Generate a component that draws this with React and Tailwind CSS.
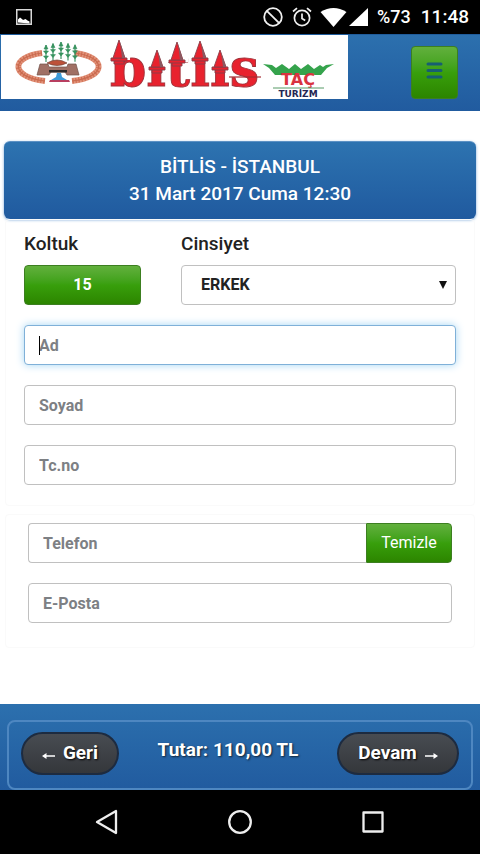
import React from 'react';

const inputBase =
  'block h-10 border bg-white px-[14px] text-base font-bold text-[#222] placeholder:text-[#7d8084] placeholder:opacity-100 outline-none';
const field = `${inputBase} w-full rounded border-[#c0c0c0]`;
const green =
  'bg-linear-to-b from-[#62b03c] via-[#389f0c] to-[#2c8500] border border-[#3c7f20]';
const pill =
  'flex h-[43px] items-center justify-center gap-2 rounded-full border-2 border-[#1d2b40] bg-linear-to-b from-[#484c52] to-[#34373b] text-[19px] font-bold text-white [text-shadow:1px_1px_2px_#000]';

function StatusBar() {
  return (
    <div className="flex h-[34px] shrink-0 items-center bg-black pl-4 pr-[11px] text-white">
      <svg width="16" height="16" viewBox="0 0 16 16" aria-hidden="true">
        <rect x="0.75" y="0.75" width="14.5" height="14.5" fill="none" stroke="#d8d8d8" strokeWidth="1.5" />
        <path d="M2 13.5V10.500l2-2 2 1.500 1 1 2.500-1 2 1.500 2 1v2z" fill="#fff" />
      </svg>
      <div className="ml-auto flex items-center">
        <svg width="20" height="20" viewBox="0 0 20 20" fill="none" stroke="#f0f0f0" strokeWidth="1.8" aria-hidden="true">
          <circle cx="10" cy="10" r="8.8" />
          <path d="M3.8 3.8l12.4 12.4" />
        </svg>
        <svg className="ml-[9px]" width="20" height="20" viewBox="0 0 20 20" fill="none" stroke="#f0f0f0" strokeWidth="1.7" aria-hidden="true">
          <circle cx="10" cy="11" r="7.6" />
          <path d="M10 6.500v5l3.200 2M1 4.500l4-3.400M19 4.500l-4-3.400" />
        </svg>
        <svg className="ml-2" width="27" height="19" viewBox="0 0 27 19" fill="#fff" aria-hidden="true">
          <path d="M0.500 4Q13.500-4 26.500 4L13.500 19z" />
        </svg>
        <svg className="ml-[2px]" width="19" height="18" viewBox="0 0 19 18" fill="#fff" aria-hidden="true">
          <path d="M19 0v18H0z" />
        </svg>
        <span className="ml-[9px] text-lg font-medium">%73</span>
        <span className="ml-[10px] text-[19px] font-medium">11:48</span>
      </div>
    </div>
  );
}

const trees = [45, 52, 60, 67, 74];
const towers = [
  { x: 118, top: 5, base: 23 },
  { x: 156, top: 15, base: 32 },
  { x: 176, top: 7, base: 25 },
  { x: 199, top: 6, base: 23 },
  { x: 219, top: 15, base: 32 },
];

function Logo() {
  return (
    <svg className="block h-16 w-[347px] bg-white" viewBox="0 0 347 64" role="img" aria-label="Bitlis Taç Turizm">
      <g fill="none">
        <path d="M41 18C9 22 9 42 44 46M74 18C106 22 106 42 71 46" stroke="#e2937a" strokeWidth="6" />
        <path d="M41 18C9 22 9 42 44 46M74 18C106 22 106 42 71 46" stroke="#cf6f54" strokeWidth="5" strokeDasharray="1.200 1.800" />
        <path d="M41 18C9 22 9 42 44 46M74 18C106 22 106 42 71 46" stroke="#c96a4e" strokeWidth="1.200" />
      </g>
      <g stroke="#2f8b59" strokeWidth="1.100" fill="#38955f">
        {trees.map((x) => (
          <g key={x} transform={`translate(${x} ${7 + Math.abs(x - 60) / 5})`}>
            <path d="M0 0v17" />
            <path d="M0 0l2 4h-4zM-2.500 6h5L0 9zM-2.500 11h5L0 14z" strokeWidth="0.500" />
          </g>
        ))}
      </g>
      <path d="M46 28Q56 22 66 28Q56 33 46 28z" fill="#bd5139" stroke="#704437" strokeWidth="0.700" />
      <path d="M39 29h8l1 3h18l1-3h8l3 11H66l-2-3H50l-2 3H36z" fill="#a07064" stroke="#705047" strokeWidth="0.700" />
      <path d="M48 35h18v2.500H48z" fill="#2b2b2b" />
      <path d="M56 38h4l1 4 5 3H50l5-3z" fill="#3c9ad8" />
      <path d="M49 45h19l1 2H48z" fill="#b83f60" />
      <text x="109" y="51" fontSize="52" fontWeight="700" fill="#e8222e" stroke="#9e3038" strokeWidth="0.900" className="font-['DejaVu_Serif']">
        bitlis
      </text>
      {towers.map(({ x, top, base }) => (
        <g key={x}>
          <path d={`M${x - 11} 0h22v${base + 2}h-22z`} fill="#fff" />
        </g>
      ))}
      {towers.map(({ x, top, base }) => (
        <g key={x}>
          <g fill="#e8222e" stroke="#87404a" strokeWidth="0.900">
            <path d={`M${x - 5} ${base + 2}h10v4h-10z`} />
            <path d={`M${x - 8} ${base}h16v3h-16z`} />
            <path d={`M${x} ${top}L${x + 6} ${base}h-12z`} />
          </g>
          <path d={`M${x + 1} ${top + 2}L${x + 6} ${base}h-3z`} fill="#8b5860" />
        </g>
      ))}
      <path d="M228 42h32" stroke="#a52a32" strokeWidth="1.200" />
      <path d="M262 29l9 1 4 3 6-4 7 5 6-5 6 5 7-5 6 5 6-4 3 2 3-2 8-1-7 4-6 7h-46l-6-7z" fill="#35a34c" />
      <text x="297" y="50" textAnchor="middle" fontSize="16" fontWeight="700" fill="#d9333f" className="font-['DejaVu_Sans']">
        TAÇ
      </text>
      <path d="M272 53h51" stroke="#579a67" strokeWidth="1" />
      <text x="297" y="62" textAnchor="middle" fontSize="9" fontWeight="700" fill="#242653" className="font-['DejaVu_Sans']">
        TURİZM
      </text>
    </svg>
  );
}

function Header() {
  return (
    <header className="flex h-[77px] shrink-0 items-start justify-between border-t border-[#1f5c9c] bg-linear-to-b from-[#2c70ae] to-[#215b9f] pl-px pr-[22px]">
      <Logo />
      <button type="button" aria-label="Menü" className={`mt-[11px] flex h-[53px] w-[47px] items-center justify-center rounded ${green}`}>
        <svg className="mb-1" width="17" height="18" viewBox="0 0 17 18" stroke="#175e72" strokeWidth="3" strokeLinecap="round" aria-hidden="true">
          <path d="M2 2h13M2 8.500h13M2 15h13" />
        </svg>
      </button>
    </header>
  );
}

function PassengerForm() {
  return (
    <section className="mx-[5px] rounded border border-[#fafafa] px-[18px] pb-5 pt-2">
      <div className="flex gap-10">
        <div className="w-[117px]">
          <h2 className="h-[37px] text-[19px] leading-8 font-medium text-[#222]">Koltuk</h2>
          <button type="button" className={`h-10 w-full rounded text-base font-bold text-white ${green}`}>15</button>
        </div>
        <div className="flex-1">
          <label htmlFor="gender" className="block h-[37px] text-[19px] leading-8 font-medium text-[#222]">Cinsiyet</label>
          <div className="relative">
            <select id="gender" defaultValue="ERKEK" className="block h-10 w-full appearance-none rounded border border-[#c0c0c0] bg-white px-[19px] text-base font-bold text-[#222] outline-none">
              <option>ERKEK</option>
              <option>KADIN</option>
            </select>
            <svg className="pointer-events-none absolute right-[9px] top-4" width="8" height="8" viewBox="0 0 8 8" aria-hidden="true">
              <path d="M0 0h8L4 8z" fill="#111" />
            </svg>
          </div>
        </div>
      </div>
      <div className="mt-5 flex flex-col gap-5">
        <div className="relative">
          <input aria-label="Ad" placeholder="Ad" className={`${inputBase} w-full rounded border-[#7fb0d8] shadow-[0_0_8px_#a4d5f3]`} />
          <span className="absolute left-[15px] top-[11px] h-[19px] w-px bg-black" />
        </div>
        <input aria-label="Soyad" placeholder="Soyad" className={field} />
        <input aria-label="Tc.no" placeholder="Tc.no" className={field} />
      </div>
    </section>
  );
}

function ContactForm() {
  return (
    <section className="mx-[5px] mt-2 flex flex-col gap-5 rounded border border-[#fafafa] px-[22px] pb-6 pt-2">
      <div className="flex">
        <input aria-label="Telefon" placeholder="Telefon" className={`${inputBase} min-w-0 flex-1 rounded-l border-r-0 border-[#c0c0c0]`} />
        <button type="button" className={`h-10 w-[86px] rounded-r text-base text-white ${green}`}>Temizle</button>
      </div>
      <input aria-label="E-Posta" placeholder="E-Posta" className={field} />
    </section>
  );
}

function Footer() {
  return (
    <footer className="mt-auto h-[86px] shrink-0 bg-linear-to-b from-[#2c70ae] to-[#215b9f] px-[7px] pt-4">
      <div className="flex h-[70px] items-start justify-between rounded-lg border-2 border-[#4e87c1] px-3 pt-[10px]">
        <button type="button" className={`w-[98px] ${pill}`}>
          <ArrowLeft />
          Geri
        </button>
        <p className="pt-[6px] text-[19px] leading-6 font-bold text-white [text-shadow:1px_1px_2px_#123]">Tutar: 110,00 TL</p>
        <button type="button" className={`w-[122px] ${pill}`}>
          Devam
          <ArrowRight />
        </button>
      </div>
    </footer>
  );
}

function ArrowLeft() {
  return (
    <svg className="mt-1" width="13" height="8" viewBox="0 0 13 8" aria-hidden="true">
      <path d="M0 4l4.500-3v2.200H13v1.600H4.500V7z" fill="#fff" />
    </svg>
  );
}

function ArrowRight() {
  return (
    <svg className="mt-1" width="13" height="8" viewBox="0 0 13 8" aria-hidden="true">
      <path d="M13 4L8.500 1v2.200H0v1.600h8.500V7z" fill="#fff" />
    </svg>
  );
}

function NavigationBar() {
  return (
    <nav aria-label="Sistem" className="flex h-16 shrink-0 items-center justify-center gap-[107px] bg-black">
      <button type="button" aria-label="Geri">
        <svg width="26" height="26" viewBox="0 0 26 26" fill="none" stroke="#eee" strokeWidth="2.300" strokeLinejoin="round" aria-hidden="true">
          <path d="M22 2v22L3 13z" />
        </svg>
      </button>
      <button type="button" aria-label="Ana ekran">
        <svg width="26" height="26" viewBox="0 0 26 26" fill="none" stroke="#eee" strokeWidth="2.300" aria-hidden="true">
          <circle cx="13" cy="13" r="10.800" />
        </svg>
      </button>
      <button type="button" aria-label="Son uygulamalar">
        <svg width="26" height="26" viewBox="0 0 26 26" fill="none" stroke="#eee" strokeWidth="2.300" strokeLinejoin="round" aria-hidden="true">
          <rect x="3.500" y="3.500" width="19" height="19" />
        </svg>
      </button>
    </nav>
  );
}

export default function App() {
  return (
    <div className="flex min-h-screen flex-col bg-white font-['Roboto',sans-serif]">
      <StatusBar />
      <Header />
      <main className="pt-[30px]">
        <h1 className="mx-1 h-[78px] rounded-md border-t border-[#5c91c4] bg-linear-to-b from-[#2d73b0] to-[#205a9f] pt-[11px] text-center text-[19px] leading-[27px] font-medium text-white shadow-[0_1px_3px_#78a5d6]">
          BİTLİS - İSTANBUL
          <br />
          31 Mart 2017 Cuma 12:30
        </h1>
        <PassengerForm />
        <ContactForm />
      </main>
      <Footer />
      <NavigationBar />
    </div>
  );
}
